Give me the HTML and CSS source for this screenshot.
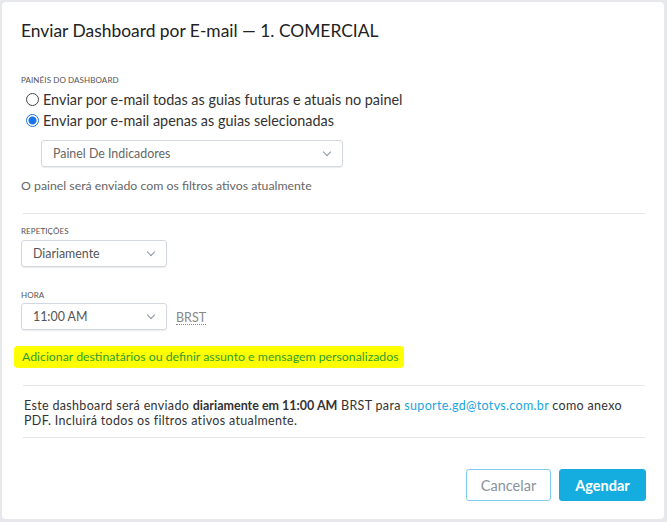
FILE: index.html
```html
<!DOCTYPE html>
<html lang="pt-BR">
<head>
  <meta charset="UTF-8">
  <title>Enviar Dashboard por E-mail</title>
  <link rel="stylesheet" href="styles.css">
</head>
<body>

  <div class="modal">
    <h1 class="modal-title">Enviar Dashboard por E-mail — 1. COMERCIAL</h1>

    <div class="section">
      <div class="label">PAINÉIS DO DASHBOARD</div>
      <label class="radio"><span class="dot"></span>Enviar por e-mail todas as guias futuras e atuais no painel</label>
      <label class="radio checked"><span class="dot"></span>Enviar por e-mail apenas as guias selecionadas</label>
      <div class="select wide"><span>Painel De Indicadores</span><span class="chev"></span></div>
      <p class="hint">O painel será enviado com os filtros ativos atualmente</p>
    </div>

    <hr>

    <div class="section">
      <div class="label">REPETIÇÕES</div>
      <div class="select"><span>Diariamente</span><span class="chev"></span></div>

      <div class="label gap">HORA</div>
      <div class="row">
        <div class="select"><span>11:00 AM</span><span class="chev"></span></div>
        <span class="tz">BRST</span>
      </div>

      <div class="custom"><span class="marker">Adicionar destinatários ou definir assunto e mensagem personalizados</span></div>
    </div>

    <hr class="after-custom">

    <p class="summary">Este dashboard será enviado <b>diariamente em 11:00 AM</b> BRST para <a href="#">suporte.gd@totvs.com.br</a> como anexo <span>PDF. Incluirá todos os filtros ativos atualmente.</span></p>

    <hr>

    <div class="actions">
      <button class="btn">Cancelar</button>
      <button class="btn primary">Agendar</button>
    </div>
  </div>

</body>
</html>
```

FILE: styles.css
```css
* {
  margin: 0;
  padding: 0;
  box-sizing: border-box;
}

body {
  background: #e6e8ec;
  font-family: Lato, "Open Sans", sans-serif;
  color: #333;
  padding: 2px 3px 3px 2px;
}

.modal {
  background: #fff;
  border-radius: 4px;
  height: 517px;
  padding: 18px 19px 0 19px;
}

.modal-title {
  font-size: 17.4px;
  font-weight: 400;
  color: #222;
  margin-bottom: 34px;
}

.label {
  font-size: 8px;
  color: #555;
  letter-spacing: 0.1px;
  margin-bottom: 4px;
}

.label.gap {
  margin-top: 23px;
  margin-bottom: 3px;
}

.radio {
  display: flex;
  align-items: center;
  font-size: 14.4px;
  color: #333;
  height: 21px;
  margin-left: 5px;
}

.dot {
  width: 13px;
  height: 13px;
  border: 1px solid #444;
  border-radius: 50%;
  margin-right: 4px;
  flex-shrink: 0;
}

.radio.checked .dot {
  border-color: #1a73e8;
  background: radial-gradient(circle, #1a73e8 0 3.5px, #fff 4.5px);
}

.select {
  display: flex;
  align-items: center;
  justify-content: space-between;
  width: 146px;
  height: 27px;
  border: 1px solid #d3d8de;
  border-radius: 3px;
  box-shadow: 0 1px 1px rgba(0, 0, 0, 0.08);
  padding: 0 12px 0 11px;
  font-size: 12.4px;
  color: #555;
}

.select.wide {
  width: 302px;
  margin: 9px 0 0 20px;
  color: #666;
}

.chev {
  width: 6px;
  height: 6px;
  border-right: 1px solid #8a949e;
  border-bottom: 1px solid #8a949e;
  transform: rotate(45deg);
  margin-top: -4px;
}

.hint {
  font-size: 12.3px;
  color: #666;
  margin-top: 11px;
}

hr {
  border: 0;
  border-top: 1px solid #e3e6ea;
  margin: 20px 0 0 2px;
}

hr + .section {
  margin-top: 12px;
}

.row {
  display: flex;
  align-items: center;
  gap: 9px;
}

.tz {
  font-size: 12.5px;
  color: #888;
  border-bottom: 1px dotted #888;
  line-height: 13px;
  margin-top: 2px;
}

.custom {
  display: flex;
  margin-top: 16px;
}

.marker {
  background: #ffff00;
  color: #2e9e2e;
  font-size: 12.3px;
  line-height: 15px;
  padding: 3px 5px 4px 8px;
  margin-left: -7px;
  border-radius: 4px;
}

hr.after-custom {
  margin-top: 17px;
}

.summary {
  font-size: 12.5px;
  letter-spacing: 0.33px;
  line-height: 15px;
  color: #333;
  margin: 12px 0 9px 3px;
}

.summary b {
  font-weight: 700;
  letter-spacing: 0;
}

.summary a {
  color: #1aa6e0;
  text-decoration: none;
}

.summary + hr {
  margin-top: 0;
}

.actions {
  display: flex;
  justify-content: flex-end;
  gap: 8px;
  margin-top: 31px;
  margin-right: -1px;
}

.btn {
  height: 32px;
  border-radius: 3px;
  font-family: Lato, "Open Sans", sans-serif;
  font-size: 14.5px;
  background: #fff;
  border: 1px solid #7fcdee;
  color: #8a929c;
  width: 85px;
}

.btn.primary {
  background: #15ade0;
  border-color: #15ade0;
  color: #fff;
  font-weight: 700;
  width: 87px;
}
```
